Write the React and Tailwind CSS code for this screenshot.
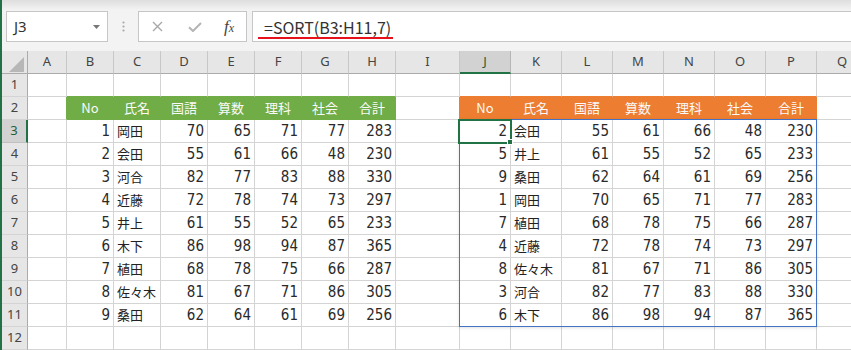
import { Fragment } from 'react';

const HEAD = ['No', '氏名', '国語', '算数', '理科', '社会', '合計'];

const SCORES = [
  [1, '岡田', 70, 65, 71, 77, 283],
  [2, '会田', 55, 61, 66, 48, 230],
  [3, '河合', 82, 77, 83, 88, 330],
  [4, '近藤', 72, 78, 74, 73, 297],
  [5, '井上', 61, 55, 52, 65, 233],
  [6, '木下', 86, 98, 94, 87, 365],
  [7, '植田', 68, 78, 75, 66, 287],
  [8, '佐々木', 81, 67, 71, 86, 305],
  [9, '桑田', 62, 64, 61, 69, 256],
];

// =SORT(B3:H11,7)
const SORTED = [...SCORES].sort((a, b) => a[6] - b[6]);

const COLS = 'ABCDEFGHIJKLMNOPQ'.split('');
const ROWS = [1, 2, 3, 4, 5, 6, 7, 8, 9, 10, 11, 12];

const NUM = "font-['Liberation_Sans_Narrow','DejaVu_Sans_Condensed','Noto_Sans_CJK_JP',sans-serif] text-[15px]";
const JP = "font-['Noto_Sans_CJK_JP',sans-serif] text-[13px]";

function FormulaBar() {
  return (
    <div className="flex h-[51px] shrink-0 items-start bg-[linear-gradient(#dedede,#f3f3f3_10px)] pt-[11px]">
      {/* name box */}
      <div className="ml-[4px] flex h-[31px] w-[102px] items-center justify-between border border-[#c6c6c6] bg-white pl-[7px] pr-[7px]">
        <span className="font-['Noto_Sans',sans-serif] text-[15px] text-[#333]">J3</span>
        <svg width="7" height="4" viewBox="0 0 7 4">
          <polygon points="0,0 7,0 3.5,4" fill="#777" />
        </svg>
      </div>

      <div className="flex h-[31px] w-[30px] items-center justify-center">
        <svg width="3" height="11" viewBox="0 0 3 11">
          <circle cx="1.5" cy="1.5" r="1.1" fill="#a8a8a8" />
          <circle cx="1.5" cy="5.5" r="1.1" fill="#a8a8a8" />
          <circle cx="1.5" cy="9.5" r="1.1" fill="#a8a8a8" />
        </svg>
      </div>

      {/* cancel / enter / function */}
      <div className="flex h-[31px] w-[109px] items-center border border-[#c6c6c6] bg-white pl-[13px]">
        <svg width="11" height="11" viewBox="0 0 11 11">
          <path d="M1 1 L10 10 M10 1 L1 10" stroke="#a8a8a8" strokeWidth="1.4" fill="none" />
        </svg>
        <svg className="ml-[25px]" width="14" height="10" viewBox="0 0 14 10">
          <path d="M1 5.2 L5 9 L13 1" stroke="#b4b4b4" strokeWidth="2" fill="none" />
        </svg>
        <span className="ml-[22px] font-['Liberation_Serif',serif] text-[17px] italic leading-none text-[#444]">
          f<span className="text-[12px]">x</span>
        </span>
      </div>

      {/* formula input */}
      <div className="relative ml-[5px] flex h-[31px] flex-1 items-center border border-r-0 border-[#c6c6c6] bg-white pl-[11px]">
        <span className="font-['Noto_Sans_CJK_JP',sans-serif] text-[16px] text-[#333]">=SORT(B3:H11,7)</span>
        <div className="absolute left-[5px] top-[25px] h-[2px] w-[135px] bg-[#e8101a]" />
      </div>
    </div>
  );
}

function ColHead({ label }) {
  const sel = label === 'J';
  return (
    <div
      className={
        sel
          ? "flex items-center justify-center border-r border-b-2 border-r-[#b5b5b5] border-b-[#217346] bg-[#d2d2d2] font-['Noto_Sans',sans-serif] text-[13px] text-[#1e5e38]"
          : "flex items-center justify-center border-r border-b border-r-[#c8c8c8] border-b-[#ababab] bg-[#e6e6e6] font-['Noto_Sans',sans-serif] text-[13px] text-[#444]"
      }
    >
      {label}
    </div>
  );
}

function RowHead({ r }) {
  const sel = r === 3;
  return (
    <div
      className={
        sel
          ? "flex items-center justify-center border-r-2 border-b border-r-[#217346] border-b-[#c0c0c0] bg-[#d2d2d2] font-['Noto_Sans',sans-serif] text-[13px] text-[#1e5e38]"
          : "flex items-center justify-center border-r border-b border-r-[#ababab] border-b-[#d4d4d4] bg-[#e6e6e6] font-['Noto_Sans',sans-serif] text-[13px] text-[#444]"
      }
    >
      {r}
    </div>
  );
}

function cellValue(r, c) {
  const inLeft = c >= 1 && c <= 7;
  const inRight = c >= 9 && c <= 15;
  if (r === 2 && inLeft) return { v: HEAD[c - 1], head: 'green' };
  if (r === 2 && inRight) return { v: HEAD[c - 9], head: 'orange' };
  if (r >= 3 && r <= 11 && inLeft) return { v: SCORES[r - 3][c - 1] };
  if (r >= 3 && r <= 11 && inRight) return { v: SORTED[r - 3][c - 9] };
  return { v: null };
}

function Cell({ r, c }) {
  const { v, head } = cellValue(r, c);
  const inLeft = c >= 1 && c <= 7;
  const inRight = c >= 9 && c <= 15;

  let box = 'border-r border-b border-r-[#d4d4d4] border-b-[#d4d4d4]';
  if (head === 'green') box = 'border-r border-b border-[#70ad47] bg-[#70ad47]';
  else if (head === 'orange') box = 'border-r border-b border-[#ed7d31] bg-[#ed7d31]';
  else if (r === 1 && inLeft) box = 'border-r border-b border-r-[#d4d4d4] border-b-[#70ad47]';
  else if (r === 1 && inRight) box = 'border-r border-b border-r-[#d4d4d4] border-b-[#ed7d31]';
  else if (r === 2 && c === 0) box = 'border-r border-b border-r-[#70ad47] border-b-[#d4d4d4]';
  else if (r === 2 && c === 8) box = 'border-r border-b border-r-[#ed7d31] border-b-[#d4d4d4]';

  let text = '';
  if (head) text = `justify-center text-[#fafafa] ${JP}`;
  else if (typeof v === 'number') text = `justify-end pr-[3px] text-[#2a2a2a] ${NUM}`;
  else if (typeof v === 'string') text = `pl-[3px] text-[#222] ${JP}`;

  const anchor = r === 3 && c === 9;

  return (
    <div className={`relative flex items-center whitespace-nowrap ${box} ${text}`}>
      {v}
      {anchor && (
        <>
          {/* spill range J3:P11 */}
          <div className="pointer-events-none absolute -left-px -top-px z-10 h-[208px] w-[358px] border border-[#4472c4] shadow-[0_1px_3px_rgba(0,0,0,0.12)]" />
          {/* active cell */}
          <div className="pointer-events-none absolute -left-[2px] -top-px z-20 h-[25px] w-[54px] border-2 border-[#217346]">
            <div className="absolute -bottom-[3px] -right-[3px] h-[6px] w-[6px] border border-white bg-[#217346]" />
          </div>
        </>
      )}
    </div>
  );
}

export default function App() {
  return (
    <div className="flex h-[350px] w-[851px] overflow-hidden bg-white">
      <div className="w-[2px] shrink-0 bg-[#217346]" />
      <div className="flex min-w-0 flex-1 flex-col overflow-hidden">
        <FormulaBar />
        <div className="grid auto-rows-[23px] grid-cols-[26px_39px_repeat(7,47px)_64px_repeat(8,51px)]">
          <div className="flex items-end justify-end border-r border-b border-r-[#ababab] border-b-[#ababab] bg-[#e6e6e6] pb-[1px] pr-[3px]">
            <svg width="15" height="15" viewBox="0 0 15 15">
              <polygon points="15,0 15,15 0,15" fill="#b7b7b7" />
            </svg>
          </div>
          {COLS.map((l) => (
            <ColHead key={l} label={l} />
          ))}
          {ROWS.map((r) => (
            <Fragment key={r}>
              <RowHead r={r} />
              {COLS.map((l, c) => (
                <Cell key={l} r={r} c={c} />
              ))}
            </Fragment>
          ))}
        </div>
      </div>
    </div>
  );
}
